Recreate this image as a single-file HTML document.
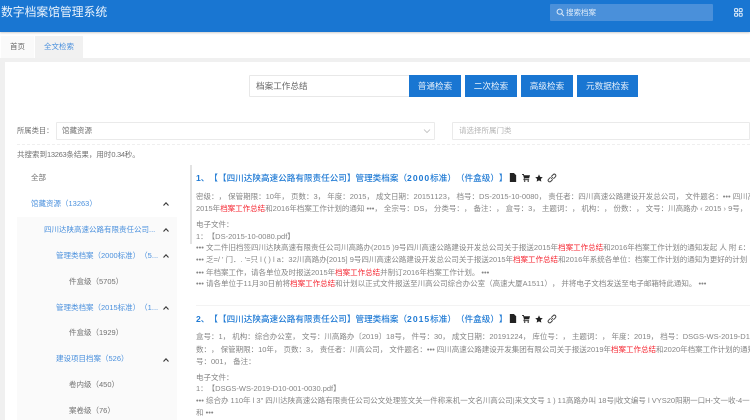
<!DOCTYPE html>
<html lang="zh"><head><meta charset="utf-8">
<style>
*{box-sizing:border-box;margin:0;padding:0}
html,body{width:750px;height:420px;overflow:hidden;background:#fff}
body{font-family:"Liberation Sans","Noto Sans CJK SC",sans-serif;position:relative;text-spacing-trim:space-all;font-kerning:none}
#w{position:absolute;left:0;top:0;width:750px;height:420px;overflow:hidden;filter:blur(.3px)}
.a{position:absolute;white-space:nowrap}
.l{position:absolute;white-space:nowrap;font-size:7.5px;line-height:12px;color:#858585;left:196px;width:554px;overflow:hidden}
.l em{font-style:normal;color:#f5222d}
.t{position:absolute;white-space:nowrap;font-size:8.6px;line-height:12px;color:#1f7ad4;left:196px;font-weight:500}
.t b{font-weight:700;letter-spacing:1px}
.t i{font-style:normal;font-weight:700}
.b{position:absolute;top:75px;height:22px;background:#1976d2;color:#e6f0fb;font-size:8.6px;line-height:22px;text-align:center}
.s{position:absolute;white-space:nowrap;font-size:7.5px;line-height:12px}
.blue{color:#4a90dd}.gr{color:#707070}
.ar{position:absolute;left:163px}
</style></head><body><div id="w">
<div class="a" style="left:0;top:0;width:750px;height:32px;background:#1976d2;box-shadow:0 1px 2px rgba(0,0,0,.2)"></div>
<div class="a" style="left:1px;top:4px;font-size:11.8px;line-height:17px;color:#eaf3fc">数字档案馆管理系统</div>
<div class="a" style="left:550px;top:4px;width:163px;height:17px;background:#4a90da;border-radius:1px"></div>
<svg class="a" style="left:556px;top:8px" width="9" height="9" viewBox="0 0 9 9" fill="none" stroke="#dbe9f8" stroke-width="1"><circle cx="3.7" cy="3.7" r="2.6"/><path d="M5.6 5.6L8 8"/></svg>
<div class="a" style="left:566px;top:6px;font-size:7.5px;line-height:13px;color:#e3eefa">搜索档案</div>
<svg class="a" style="left:734px;top:8px" width="9" height="9" viewBox="0 0 9 9" fill="none" stroke="#e3eefa" stroke-width="1"><rect x=".6" y=".6" width="3" height="3" rx=".8"/><rect x="5.2" y=".6" width="3" height="3" rx=".8"/><rect x=".6" y="5.2" width="3" height="3" rx=".8"/><rect x="5.2" y="5.2" width="3" height="3" rx=".8"/></svg>

<div class="a" style="left:1px;top:36px;width:33px;height:22px;background:#fafafa;color:#666;font-size:7.5px;line-height:22px;text-align:center">首页</div>
<div class="a" style="left:35px;top:36px;width:48px;height:22px;background:#f1f1f1;color:#4a90dd;font-size:7.5px;line-height:22px;text-align:center">全文检索</div>
<div class="a" style="left:0;top:58px;width:750px;height:4px;background:#f0f0f0"></div>
<div class="a" style="left:0;top:58px;width:5px;height:362px;background:#f0f0f0"></div>

<div class="a" style="left:249px;top:75px;width:161px;height:22px;border:1px solid #e8e8e8;border-radius:1px;font-size:8.6px;line-height:20px;padding-left:6px;color:#666">档案工作总结</div>
<div class="b" style="left:409px;width:52px">普通检索</div>
<div class="b" style="left:465px;width:52px">二次检索</div>
<div class="b" style="left:521px;width:52px">高级检索</div>
<div class="b" style="left:577px;width:61px">元数据检索</div>

<div class="a gr" style="left:17px;top:125px;font-size:7.3px;line-height:12px">所属类目：</div>
<div class="a" style="left:56px;top:122px;width:379px;height:18px;border:1px solid #eaeaea;border-radius:1px;font-size:7.5px;line-height:16px;padding-left:5px;color:#707070">馆藏资源</div>
<svg class="a" style="left:423px;top:128px" width="8" height="6" viewBox="0 0 8 6" fill="none" stroke="#bbb" stroke-width=".8"><path d="M1 1.5L4 4.5L7 1.5"/></svg>
<div class="a" style="left:452px;top:122px;width:298px;height:18px;border:1px solid #eaeaea;border-radius:1px;font-size:7.5px;line-height:16px;padding-left:6px;color:#b5b5b5">请选择所属门类</div>
<div class="a" style="left:17px;top:144px;width:733px;border-top:1px dashed #efefef"></div>
<div class="a gr" style="left:17px;top:149px;font-size:7.5px;line-height:12px">共搜索到<span style="letter-spacing:-.3px">13263</span>条结果，用时<span style="letter-spacing:-.3px">0.34</span>秒。</div>

<div class="a" style="left:17px;top:217px;width:160px;height:203px;background:#fafafa"></div>
<div class="s gr" style="left:31px;top:172px">全部</div>
<div class="s blue" style="left:31px;top:198px">馆藏资源（13263）</div>
<div class="s blue" style="left:44px;top:224px">四川达陕高速公路有限责任公司...</div>
<div class="s blue" style="left:56px;top:250px">管理类档案（2000标准）（5...</div>
<div class="s gr" style="left:69px;top:276px">件盒级（5705）</div>
<div class="s blue" style="left:56px;top:302px">管理类档案（2015标准）（1...</div>
<div class="s gr" style="left:69px;top:327px">件盒级（1929）</div>
<div class="s blue" style="left:56px;top:353px">建设项目档案（526）</div>
<div class="s gr" style="left:69px;top:379px">卷内级（450）</div>
<div class="s gr" style="left:69px;top:405px">案卷级（76）</div>
<svg class="ar" style="top:202px" width="6" height="4" viewBox="0 0 6 4"><path d="M0.5 3.5L3 .8L5.5 3.5" fill="none" stroke="#333" stroke-width="1.1"/></svg>
<svg class="ar" style="top:228px" width="6" height="4" viewBox="0 0 6 4"><path d="M0.5 3.5L3 .8L5.5 3.5" fill="none" stroke="#333" stroke-width="1.1"/></svg>
<svg class="ar" style="top:254px" width="6" height="4" viewBox="0 0 6 4"><path d="M0.5 3.5L3 .8L5.5 3.5" fill="none" stroke="#333" stroke-width="1.1"/></svg>
<svg class="ar" style="top:306px" width="6" height="4" viewBox="0 0 6 4"><path d="M0.5 3.5L3 .8L5.5 3.5" fill="none" stroke="#333" stroke-width="1.1"/></svg>
<svg class="ar" style="top:358px" width="6" height="4" viewBox="0 0 6 4"><path d="M0.5 3.5L3 .8L5.5 3.5" fill="none" stroke="#333" stroke-width="1.1"/></svg>

<div class="a" style="left:190px;top:165px;width:2px;height:79px;background:#e3e3e3"></div>

<div class="t" style="top:172px"><i>1</i>、【【四川达陕高速公路有限责任公司】管理类档案（<b>2000</b>标准）（件盒级）】</div>
<svg class="a" style="left:509px;top:173px" width="8" height="9" viewBox="0 0 8 10"><path d="M.5 0H5L7.5 2.5V10H.5Z" fill="#222"/></svg>
<svg class="a" style="left:522px;top:173px" width="8" height="9" viewBox="0 0 9 10" fill="#222"><path d="M0 1H2L2.5 2.5H9L8 6H3L2.6 7H8V8H1.5L2.2 5.5L1.2 2H0Z"/><circle cx="3" cy="9" r=".9"/><circle cx="7" cy="9" r=".9"/></svg>
<svg class="a" style="left:535px;top:174px" width="8" height="8" viewBox="0 0 10 10"><path d="M5 .5L6.4 3.6L9.7 4L7.3 6.2L7.9 9.5L5 7.9L2.1 9.5L2.7 6.2L.3 4L3.6 3.6Z" fill="#222"/></svg>
<svg class="a" style="left:547px;top:173px" width="10" height="10" viewBox="0 0 10 10" fill="none" stroke="#444" stroke-width="1"><path d="M4.2 5.8L5.8 4.2M3.6 4.2L1.6 6.2A1.5 1.5 0 0 0 3.8 8.4L5.8 6.4M4.2 3.6L6.2 1.6A1.5 1.5 0 0 1 8.4 3.8L6.4 5.8"/></svg>

<div class="l" style="top:191px">密级：， 保管期限：10年， 页数：3， 年度：2015， 成文日期：20151123， 档号：DS-2015-10-0080， 责任者：四川高速公路建设开发总公司， 文件题名：••• 四川高速公路建设开发总公司</div>
<div class="l" style="top:203px">2015年<em>档案工作总结</em>和2016年档案工作计划的通知 •••， 全宗号：DS， 分类号：， 备注：， 盒号：3， 主题词：， 机构：， 份数：， 文号：川高路办 ‹ 2015 › 9号，</div>
<div class="l" style="top:219px">电子文件：</div>
<div class="l" style="top:231px">1：【DS-2015-10-0080.pdf】</div>
<div class="l" style="top:242px">••• 文二件旧档签四川达陕高速有限责任公司川高路办(2015 )9号四川高速公路建设开发总公司关于报送2015年<em>档案工作总结</em>和2016年档案工作计划的通知发起 人 附 £：</div>
<div class="l" style="top:254px">••• 乏=/ ' 门．. '=只 l ( ) l a：32川高路办[2015] 9号四川高速公路建设开发总公司关于报送2015年<em>档案工作总结</em>和2016年系统各单位：档案工作计划的通知为更好的计划</div>
<div class="l" style="top:267px">••• 年档案工作，请各单位及时报送2015年<em>档案工作总结</em>并制订2016年档案工作计划。 •••</div>
<div class="l" style="top:278px">••• 请各单位于11月30日前将<em>档案工作总结</em>和计划以正式文件报送至川高公司综合办公室（高速大厦A1511）， 并将电子文档发送至电子邮箱特此通知。 •••</div>

<div class="a" style="left:196px;top:305px;width:554px;border-top:1px solid #f3f3f3"></div>

<div class="t" style="top:313px"><i>2</i>、【【四川达陕高速公路有限责任公司】管理类档案（<b>2015</b>标准）（件盒级）】</div>
<svg class="a" style="left:509px;top:314px" width="8" height="9" viewBox="0 0 8 10"><path d="M.5 0H5L7.5 2.5V10H.5Z" fill="#222"/></svg>
<svg class="a" style="left:522px;top:314px" width="8" height="9" viewBox="0 0 9 10" fill="#222"><path d="M0 1H2L2.5 2.5H9L8 6H3L2.6 7H8V8H1.5L2.2 5.5L1.2 2H0Z"/><circle cx="3" cy="9" r=".9"/><circle cx="7" cy="9" r=".9"/></svg>
<svg class="a" style="left:535px;top:315px" width="8" height="8" viewBox="0 0 10 10"><path d="M5 .5L6.4 3.6L9.7 4L7.3 6.2L7.9 9.5L5 7.9L2.1 9.5L2.7 6.2L.3 4L3.6 3.6Z" fill="#222"/></svg>
<svg class="a" style="left:547px;top:314px" width="10" height="10" viewBox="0 0 10 10" fill="none" stroke="#444" stroke-width="1"><path d="M4.2 5.8L5.8 4.2M3.6 4.2L1.6 6.2A1.5 1.5 0 0 0 3.8 8.4L5.8 6.4M4.2 3.6L6.2 1.6A1.5 1.5 0 0 1 8.4 3.8L6.4 5.8"/></svg>

<div class="l" style="top:331px">盒号：1， 机构：综合办公室， 文号：川高路办〔2019〕18号， 件号：30， 成文日期：20191224， 库位号：， 主题词：， 年度：2019， 档号：DSGS-WS-2019-D10-001-0030， 全宗号：DSGS</div>
<div class="l" style="top:344px">数：， 保管期限：10年， 页数：3， 责任者：川高公司， 文件题名：••• 四川高速公路建设开发集团有限公司关于报送2019年<em>档案工作总结</em>和2020年档案工作计划的通知</div>
<div class="l" style="top:356px">号：001， 备注：</div>
<div class="l" style="top:372px">电子文件：</div>
<div class="l" style="top:383px">1：【DSGS-WS-2019-D10-001-0030.pdf】</div>
<div class="l" style="top:395px">••• 综合办 110年 l 3" 四川达陕高速公路有限责任公司公文处理签文关一件称来机一文名川高公司|来文文号 1 ) 11高路办叫 18号|收文编号 l VYS20阳期一口H-文一收-4一</div>
<div class="l" style="top:407px">和 •••</div>
</div></body></html>
